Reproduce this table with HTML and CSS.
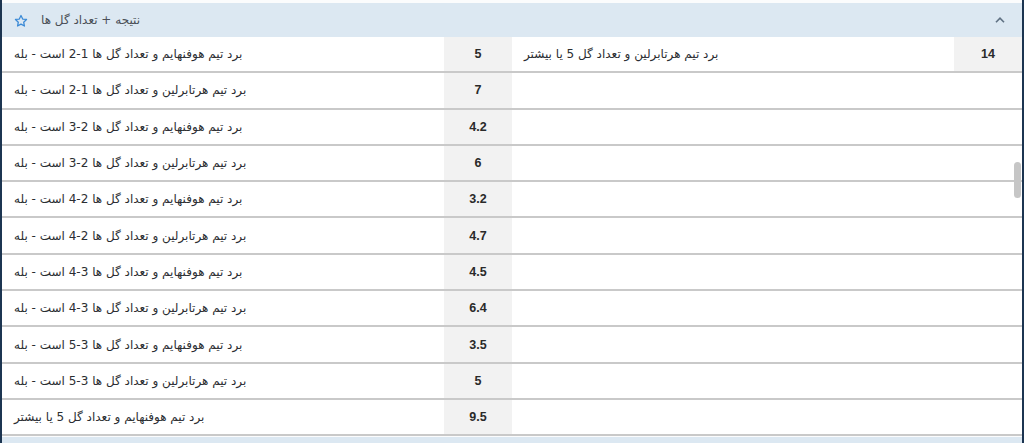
FILE: index.html
```html
<!DOCTYPE html>
<html lang="fa">
<head>
<meta charset="utf-8">
<link rel="stylesheet" href="styles.css">
</head>
<body>
<div class="panel">
  <div class="header">
    <svg class="star" width="14" height="14" viewBox="0 0 24 24"><path d="M12 2.5l2.9 6.1 6.6.8-4.9 4.6 1.3 6.6L12 17.3l-5.9 3.3 1.3-6.6-4.9-4.6 6.6-.8z" fill="none" stroke="#3b8ad6" stroke-width="2.2" stroke-linejoin="round"/></svg>
    <span class="title" dir="rtl">نتیجه + تعداد گل ها</span>
    <svg class="chev" width="10" height="6" viewBox="0 0 10 6"><path d="M1 5.2L5 1.2 9 5.2" fill="none" stroke="#5f7183" stroke-width="1.6"/></svg>
  </div>
  <div class="rows">
    <div class="row"><span class="txt" dir="rtl">برد تیم هوفنهایم و تعداد گل ها 1-2 است - بله</span><span class="num">5</span><span class="txt" dir="rtl">برد تیم هرتابرلین و تعداد گل 5 یا بیشتر</span><span class="num">14</span></div>
    <div class="row"><span class="txt" dir="rtl">برد تیم هرتابرلین و تعداد گل ها 1-2 است - بله</span><span class="num">7</span><span class="txt"></span><span class="blank"></span></div>
    <div class="row"><span class="txt" dir="rtl">برد تیم هوفنهایم و تعداد گل ها 2-3 است - بله</span><span class="num">4.2</span><span class="txt"></span><span class="blank"></span></div>
    <div class="row"><span class="txt" dir="rtl">برد تیم هرتابرلین و تعداد گل ها 2-3 است - بله</span><span class="num">6</span><span class="txt"></span><span class="blank"></span></div>
    <div class="row"><span class="txt" dir="rtl">برد تیم هوفنهایم و تعداد گل ها 2-4 است - بله</span><span class="num">3.2</span><span class="txt"></span><span class="blank"></span></div>
    <div class="row"><span class="txt" dir="rtl">برد تیم هرتابرلین و تعداد گل ها 2-4 است - بله</span><span class="num">4.7</span><span class="txt"></span><span class="blank"></span></div>
    <div class="row"><span class="txt" dir="rtl">برد تیم هوفنهایم و تعداد گل ها 3-4 است - بله</span><span class="num">4.5</span><span class="txt"></span><span class="blank"></span></div>
    <div class="row"><span class="txt" dir="rtl">برد تیم هرتابرلین و تعداد گل ها 3-4 است - بله</span><span class="num">6.4</span><span class="txt"></span><span class="blank"></span></div>
    <div class="row"><span class="txt" dir="rtl">برد تیم هوفنهایم و تعداد گل ها 3-5 است - بله</span><span class="num">3.5</span><span class="txt"></span><span class="blank"></span></div>
    <div class="row"><span class="txt" dir="rtl">برد تیم هرتابرلین و تعداد گل ها 3-5 است - بله</span><span class="num">5</span><span class="txt"></span><span class="blank"></span></div>
    <div class="row"><span class="txt" dir="rtl">برد تیم هوفنهایم و تعداد گل 5 یا بیشتر</span><span class="num">9.5</span><span class="txt"></span><span class="blank"></span></div>
  </div>
  <div class="next-header"></div>
  <div class="thumb"></div>
</div>
</body>
</html>
```
FILE: styles.css
```css
html, body {
  margin: 0;
  padding: 0;
}
body {
  background: #1c3551;
  height: 443px;
  overflow: hidden;
}
.panel {
  position: relative;
  margin: 0 2px;
  height: 443px;
  background: #fbfcfd;
  padding-top: 3px;
  box-sizing: border-box;
  overflow: hidden;
  font-family: "DejaVu Sans", sans-serif;
}
.header {
  height: 34px;
  background: #dce8f2;
  display: flex;
  align-items: center;
  padding: 0 17px 0 12px;
}
.star {
  display: block;
  margin-top: 1px;
}
.title {
  margin-left: 13px;
  font-size: 12px;
  color: #4a4f56;
}
.chev {
  margin-left: auto;
  display: block;
}
.rows {
  background: #fff;
}
.row {
  display: grid;
  grid-template-columns: 442px 68px 442px 68px;
  height: 36.3px;
  box-sizing: border-box;
  border-bottom: 2px solid #c9c9c9;
}
.txt {
  display: flex;
  align-items: center;
  justify-content: flex-end;
  padding: 0 12px;
  font-size: 12px;
  color: #2b2e32;
  white-space: nowrap;
}
.num {
  display: flex;
  align-items: center;
  justify-content: center;
  background: #f2f2f2;
  font-family: "Liberation Sans", Arial, sans-serif;
  font-weight: bold;
  font-size: 12.5px;
  color: #2a2a2a;
}
.blank {
  display: block;
}
.next-header {
  margin-top: 1px;
  height: 10px;
  background: #dce8f2;
}
.thumb {
  position: absolute;
  left: 1012px;
  top: 162px;
  width: 7px;
  height: 36px;
  border-radius: 4px;
  background: #c6c6c6;
}
```
